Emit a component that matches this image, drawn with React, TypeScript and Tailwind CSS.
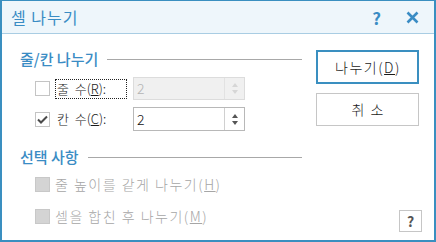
import { useState } from "react";

const Check = () => (
  <svg width="11" height="9" viewBox="0 0 11 9" className="text-[#4a4a4a]">
    <polyline points="1,4.5 4,7.5 10,1.5" fill="none" stroke="currentColor" strokeWidth="2" />
  </svg>
);

const Spinner = ({ disabled }: { disabled?: boolean }) => (
  <div
    className={`flex w-[20px] flex-col items-center justify-center gap-[3px] border-l ${
      disabled ? "border-[#e2e2e2]" : "border-[#d0d0d0]"
    }`}
  >
    <svg width="6" height="4" viewBox="0 0 6 4">
      <polygon points="3,0 6,4 0,4" fill={disabled ? "#d6d6d6" : "#555"} />
    </svg>
    <svg width="6" height="4" viewBox="0 0 6 4">
      <polygon points="0,0 6,0 3,4" fill={disabled ? "#d6d6d6" : "#555"} />
    </svg>
  </div>
);

const SectionHeader = ({ label, className }: { label: string; className: string }) => (
  <div className={`flex h-[16px] items-center gap-[9px] ${className}`}>
    <span className="text-[15px] leading-[16px] font-medium text-[#3a8cc4]">{label}</span>
    <div className="h-px flex-1 bg-[#a8a8a8]" />
  </div>
);

const App = () => {
  const [cols, setCols] = useState(true);

  return (
    <div className="flex h-[242px] w-[436px] flex-col border-x-2 border-t border-b-2 border-[#3a8fc0] bg-white font-['Noto_Sans_CJK_KR','Noto_Sans',sans-serif] font-light text-[#1a1a1a]">
      {/* title bar */}
      <div className="flex h-[33px] items-center border-b border-[#a9cde3] bg-[#eef6fb] pl-[9px] pr-[15px]">
        <span className="text-[16px] leading-none font-normal tracking-[1px] text-[#3a8cc4]">셀 나누기</span>
        <span className="ml-auto mr-[25px] text-[17px] leading-none font-bold text-[#3a8cc4]">?</span>
        <svg width="13" height="13" viewBox="0 0 13 13">
          <path d="M1.5 1.5 L11.5 11.5 M11.5 1.5 L1.5 11.5" stroke="#3a8cc4" strokeWidth="2.6" />
        </svg>
      </div>

      <div className="flex flex-1">
        {/* left column */}
        <div className="flex w-[300px] flex-col pl-[18px]">
          <SectionHeader label="줄/칸 나누기" className="mt-[17px]" />

          <div className="mt-[10px] flex h-[23px] items-center">
            <div className="ml-[15px] h-[15px] w-[15px] border border-[#c4c4c4] bg-white" />
            <div className="ml-[5px] flex h-[20px] w-[72px] items-center border border-dotted border-[#222] pl-[1px] text-[13px]">
              줄&nbsp;&nbsp;수(<span className="underline">R</span>):
            </div>
            <div className="ml-[6px] flex h-[23px] w-[112px] border border-[#dcdcdc] bg-[#f0f0f0]">
              <span className="flex-1 pl-[3px] text-[14px] leading-[21px] text-[#b4b4b4]">2</span>
              <Spinner disabled />
            </div>
          </div>

          <div className="mt-[7px] flex h-[24px] items-center">
            <button
              onClick={() => setCols(!cols)}
              className="ml-[15px] flex h-[15px] w-[15px] items-center justify-center border border-[#c4c4c4] bg-white"
            >
              {cols && <Check />}
            </button>
            <div className="ml-[5px] flex h-[20px] w-[72px] items-center border border-transparent pl-[1px] text-[13px]">
              칸&nbsp;&nbsp;수(<span className="underline">C</span>):
            </div>
            <div className="ml-[6px] flex h-[24px] w-[112px] border border-[#b8b8b8] bg-white">
              <span className="flex-1 pl-[3px] text-[14px] leading-[22px] text-[#111]">2</span>
              <Spinner />
            </div>
          </div>

          <SectionHeader label="선택 사항" className="mt-[18px]" />

          <div className="mt-[10px] flex h-[18px] items-center text-[14px] tracking-[1.5px] text-[#a6a6a6]">
            <div className="ml-[15px] h-[15px] w-[15px] border border-[#c8c8c8] bg-[#d4d4d4]" />
            <span className="ml-[5px]">
              줄 높이를 같게 나누기(<span className="underline">H</span>)
            </span>
          </div>

          <div className="mt-[14px] flex h-[18px] items-center text-[14px] tracking-[1.5px] text-[#a6a6a6]">
            <div className="ml-[15px] h-[15px] w-[15px] border border-[#c8c8c8] bg-[#d4d4d4]" />
            <span className="ml-[5px]">
              셀을 합친 후 나누기(<span className="underline">M</span>)
            </span>
          </div>
        </div>

        {/* right column */}
        <div className="flex flex-1 flex-col pl-[14px] pt-[16px]">
          <button className="flex h-[34px] w-[103px] items-center justify-center border-2 border-[#3a8fc0] bg-white pl-[1px] text-[14px] tracking-[1.5px]">
            나누기(<span className="underline">D</span>)
          </button>
          <button className="mt-[9px] flex h-[33px] w-[103px] items-center justify-center border border-[#c6c6c6] bg-white pl-[6px] text-[14px] tracking-[6px]">
            취소
          </button>
          <button className="mb-[8px] ml-auto mr-[12px] mt-auto flex h-[22px] w-[23px] items-center justify-center border border-[#c6c6c6] bg-white text-[14px] font-bold text-[#555]">
            ?
          </button>
        </div>
      </div>
    </div>
  );
};

export default App;
